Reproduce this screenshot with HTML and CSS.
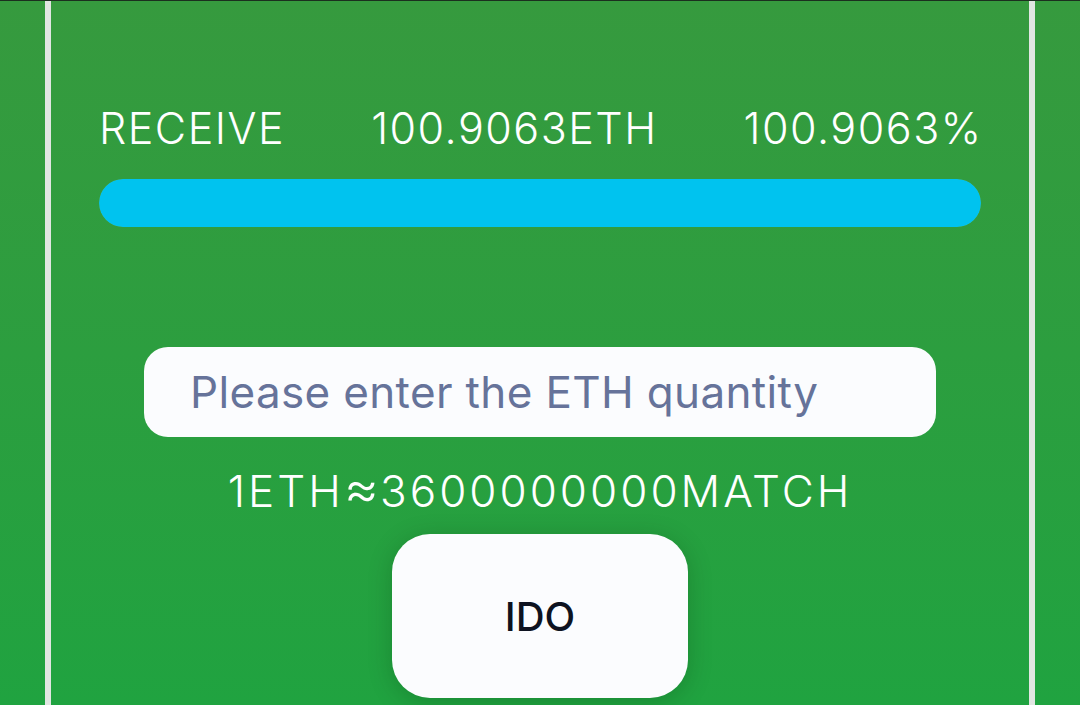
FILE: index.html
```html
<!DOCTYPE html>
<html lang="en">
<head>
<meta charset="utf-8">
<title>IDO</title>
<link rel="stylesheet" href="styles.css">
</head>
<body>
<main class="panel">
  <section class="stats">
    <span class="stat">RECEIVE</span>
    <span class="stat">100.9063ETH</span>
    <span class="stat">100.9063%</span>
  </section>
  <div class="progress"><div class="progress-fill" style="width:100%"></div></div>
  <input class="amount" type="text" placeholder="Please enter the ETH quantity">
  <p class="rate">1ETH<span class="approx">≈</span>3600000000MATCH</p>
  <button class="ido-btn" type="button">IDO</button>
</main>
</body>
</html>
```
FILE: styles.css
```css
html, body {
  margin: 0;
  padding: 0;
  height: 100%;
}

body {
  background: linear-gradient(180deg, #369a3e 0%, #2c9e3f 50%, #20a340 100%);
  border-top: 1px solid #1b2f1e;
  box-sizing: border-box;
  overflow: hidden;
  font-family: Inter, "Noto Sans", sans-serif;
  color: #ffffff;
}

.panel {
  margin-left: 45px;
  width: 990px;
  height: 100%;
  box-sizing: border-box;
  border-left: 6px solid #e1e6e2;
  border-right: 6px solid #e1e6e2;
  padding: 101px 48px 0;
  display: flex;
  flex-direction: column;
  align-items: center;
}

.stats {
  align-self: stretch;
  display: flex;
  justify-content: space-between;
  font-size: 43px;
  line-height: 52px;
  font-weight: 300;
  letter-spacing: 1.5px;
}

.stat:last-child {
  margin-right: -1.5px;
}

.progress {
  align-self: stretch;
  margin-top: 25px;
  height: 48px;
  border-radius: 24px;
  background: rgba(255, 255, 255, 0.15);
  overflow: hidden;
}

.progress-fill {
  height: 100%;
  border-radius: 24px;
  background: #00c3ef;
}

.amount {
  margin-top: 120px;
  width: 792px;
  height: 90px;
  box-sizing: border-box;
  border: none;
  border-radius: 24px;
  background: #fbfcfe;
  padding: 0 0 0 46px;
  font-family: Inter, "Noto Sans", sans-serif;
  font-size: 44px;
  font-weight: 400;
  letter-spacing: 0.35px;
  color: #0d1220;
  outline: none;
}

.amount::placeholder {
  color: #66739a;
  opacity: 1;
}

.rate {
  margin: 28px 0 0;
  font-size: 44px;
  line-height: 52px;
  font-weight: 300;
  letter-spacing: 3px;
}

.rate .approx {
  font-size: 54px;
  line-height: 0;
  letter-spacing: 1px;
}

.ido-btn {
  margin-top: 17px;
  width: 296px;
  height: 164px;
  border: none;
  border-radius: 38px;
  background: #fbfcfe;
  box-shadow: 0 4px 24px rgba(0, 40, 10, 0.22);
  font-family: Inter, "Noto Sans", sans-serif;
  font-size: 40px;
  font-weight: 500;
  color: #0d1220;
  cursor: pointer;
}
```
